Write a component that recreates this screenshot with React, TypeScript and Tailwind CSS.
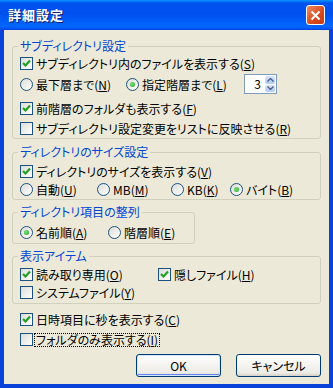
import type { ReactNode } from "react";

const Check = ({ checked }: { checked?: boolean }) => (
  <span className="relative w-[13px] h-[13px] shrink-0 border border-[#1C5180] bg-[linear-gradient(135deg,#DCDCD7,#FFFFFF)]">
    {checked && (
      <svg width="11" height="11" viewBox="0 0 11 11" className="absolute left-0 top-0">
        <polyline points="2,5 4.5,7.5 9,2.5" fill="none" stroke="#21A121" strokeWidth="2.2" />
      </svg>
    )}
  </span>
);

const Radio = ({ checked }: { checked?: boolean }) => (
  <span className="flex items-center justify-center w-[13px] h-[13px] shrink-0 rounded-full border border-[#1C5180] bg-[linear-gradient(135deg,#DCDCD7,#FFFFFF)]">
    {checked && <span className="w-[5px] h-[5px] rounded-full bg-[radial-gradient(circle_at_40%_40%,#7BE27A,#21A121)]" />}
  </span>
);

const Item = ({ children, kind, checked, className = "" }: { children: ReactNode; kind: "check" | "radio"; checked?: boolean; className?: string }) => (
  <label className={`flex items-center gap-[3px] h-[13px] whitespace-nowrap ${className}`}>
    {kind === "check" ? <Check checked={checked} /> : <Radio checked={checked} />}
    <span className="leading-[13px]">{children}</span>
  </label>
);

const Group = ({ title, children, className = "" }: { title: string; children: ReactNode; className?: string }) => (
  <fieldset className={`border border-[#D0D0BF] rounded-[3px] pl-[7px] pr-2 pt-0 m-0 min-w-0 ${className}`}>
    <legend className="-ml-[2px] px-[2px] leading-[12px] text-[#0046D5]">{title}</legend>
    {children}
  </fieldset>
);

export default function App() {
  return (
    <div className="w-[333px] h-[388px] flex flex-col text-[12px] text-black [font-family:'Noto_Sans_CJK_JP','Noto_Sans',sans-serif] [font-feature-settings:'palt']">
      <div className="h-[30px] shrink-0 flex items-center justify-between pl-[8px] pr-[8px] bg-[linear-gradient(to_bottom,#0997FF_0%,#0053EE_10%,#0050EE_45%,#0066FF_88%,#005BFF_94%,#003DD7_100%)]">
        <span className="text-white font-bold text-[13px] tracking-[1px] [text-shadow:1px_1px_0_#0A1E6A]">詳細設定</span>
        <span className="flex items-center justify-center w-[19px] h-[20px] rounded-[3px] border border-white bg-[linear-gradient(135deg,#F08A62,#D8491D_60%,#C63A12)]">
          <svg width="11" height="11" viewBox="0 0 11 11">
            <path d="M1.5 1.5 L9.5 9.5 M9.5 1.5 L1.5 9.5" stroke="#fff" strokeWidth="2" />
          </svg>
        </span>
      </div>
      <div className="flex-1 flex flex-col bg-[#ECE9D8] border-x-[4px] border-b-[4px] border-[#0842D8] px-[8px] pt-[10px]">
        <Group title="サブディレクトリ設定">
          <Item kind="check" checked className="mt-[5px]">
            サブディレクトリ内のファイルを表示する(<u>S</u>)
          </Item>
          <div className="flex items-center h-[20px] mt-[4px]">
            <Item kind="radio" className="w-[106px]">
              最下層まで(<u>N</u>)
            </Item>
            <Item kind="radio" checked className="w-[118px]">
              指定階層まで(<u>L</u>)
            </Item>
            <div className="flex w-[33px] h-[20px] border border-[#7F9DB9] bg-white">
              <span className="flex-1 text-right pr-[3px] leading-[18px]">3</span>
              <div className="flex flex-col w-[12px] p-[1px] gap-[1px]">
                <span className="flex-1 flex items-center justify-center rounded-[2px] bg-[linear-gradient(to_bottom,#D6E4FD,#B4CBF7)]">
                  <svg width="7" height="4" viewBox="0 0 7 4"><path d="M0.5 3.5 L3.5 0.5 L6.5 3.5" fill="none" stroke="#4D6185" strokeWidth="1.4" /></svg>
                </span>
                <span className="flex-1 flex items-center justify-center rounded-[2px] bg-[linear-gradient(to_bottom,#D6E4FD,#B4CBF7)]">
                  <svg width="7" height="4" viewBox="0 0 7 4"><path d="M0.5 0.5 L3.5 3.5 L6.5 0.5" fill="none" stroke="#4D6185" strokeWidth="1.4" /></svg>
                </span>
              </div>
            </div>
          </div>
          <Item kind="check" checked className="mt-[8px]">
            前階層のフォルダも表示する(<u>F</u>)
          </Item>
          <Item kind="check" className="mt-[7px] mb-[3px]">
            サブディレクトリ設定変更をリストに反映させる(<u>R</u>)
          </Item>
        </Group>

        <Group title="ディレクトリのサイズ設定" className="mt-[7px]">
          <Item kind="check" checked className="mt-[7px]">
            ディレクトリのサイズを表示する(<u>V</u>)
          </Item>
          <div className="flex mt-[5px] mb-[3px]">
            <Item kind="radio" className="w-[77px]">自動(<u>U</u>)</Item>
            <Item kind="radio" className="w-[74px]">MB(<u>M</u>)</Item>
            <Item kind="radio" className="w-[59px]">KB(<u>K</u>)</Item>
            <Item kind="radio" checked>バイト(<u>B</u>)</Item>
          </div>
        </Group>

        <Group title="ディレクトリ項目の整列" className="mt-[6px] w-[183px]">
          <div className="flex mt-[8px] mb-[4px]">
            <Item kind="radio" checked className="w-[88px]">名前順(<u>A</u>)</Item>
            <Item kind="radio">階層順(<u>E</u>)</Item>
          </div>
        </Group>

        <Group title="表示アイテム" className="mt-[6px]">
          <div className="flex mt-[6px]">
            <Item kind="check" checked className="w-[138px]">読み取り専用(<u>O</u>)</Item>
            <Item kind="check" checked>隠しファイル(<u>H</u>)</Item>
          </div>
          <Item kind="check" className="mt-[5px] mb-[4px]">
            システムファイル(<u>Y</u>)
          </Item>
        </Group>

        <div className="pl-[8px]">
          <Item kind="check" checked className="mt-[9px]">
            日時項目に秒を表示する(<u>C</u>)
          </Item>
          <label className="flex items-center gap-[1px] h-[13px] mt-[7px] whitespace-nowrap">
            <Check />
            <span className="leading-[12px] px-[1px] border border-dotted border-black">
              フォルダのみ表示する(<u>I</u>)
            </span>
          </label>
        </div>

        <div className="flex justify-end gap-[15px] mt-[8px]">
          <button className="w-[85px] h-[23px] rounded-[3px] border border-[#003C74] bg-[linear-gradient(to_bottom,#FFFFFF,#ECEBE6_85%,#D6D0C5)] shadow-[inset_0_0_0_1px_#CEE7FF,inset_0_-1px_0_1px_#6982EE] leading-[20px]">
            OK
          </button>
          <button className="w-[85px] h-[23px] rounded-[3px] border border-[#003C74] bg-[linear-gradient(to_bottom,#FFFFFF,#ECEBE6_85%,#D6D0C5)] leading-[20px]">
            キャンセル
          </button>
        </div>
      </div>
    </div>
  );
}
